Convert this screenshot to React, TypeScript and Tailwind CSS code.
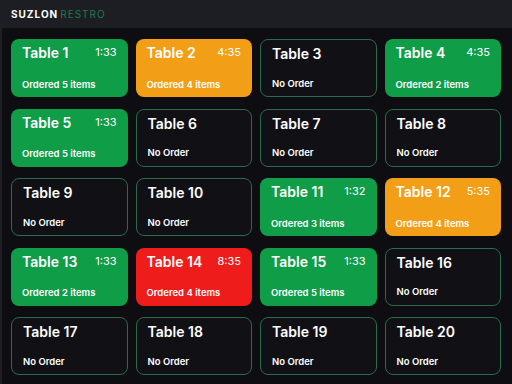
type TableInfo = { id: number; status: 'free' | 'green' | 'orange' | 'red'; time?: string; items?: number };

const tables: TableInfo[] = [
  { id: 1, status: 'green', time: '1:33', items: 5 },
  { id: 2, status: 'orange', time: '4:35', items: 4 },
  { id: 3, status: 'free' },
  { id: 4, status: 'green', time: '4:35', items: 2 },
  { id: 5, status: 'green', time: '1:33', items: 5 },
  { id: 6, status: 'free' },
  { id: 7, status: 'free' },
  { id: 8, status: 'free' },
  { id: 9, status: 'free' },
  { id: 10, status: 'free' },
  { id: 11, status: 'green', time: '1:32', items: 3 },
  { id: 12, status: 'orange', time: '5:35', items: 4 },
  { id: 13, status: 'green', time: '1:33', items: 2 },
  { id: 14, status: 'red', time: '8:35', items: 4 },
  { id: 15, status: 'green', time: '1:33', items: 5 },
  { id: 16, status: 'free' },
  { id: 17, status: 'free' },
  { id: 18, status: 'free' },
  { id: 19, status: 'free' },
  { id: 20, status: 'free' },
];

const cardStyles = {
  free: 'bg-[#111015] border border-[#2b6a4b]',
  green: 'bg-[#0f9d48]',
  orange: 'bg-[#f29f17]',
  red: 'bg-[#ef1c1c]',
};

export default function App() {
  return (
    <div className="w-[512px] h-[384px] bg-[#0e0e12] flex flex-col overflow-hidden" style={{ fontFamily: 'Inter, "Open Sans", sans-serif' }}>
      <div className="h-[28px] bg-[#1d1e23] flex items-center pl-[11px] text-[10px] font-bold tracking-[0.1em]">
        <span className="text-white">SUZLON</span>
        <span className="text-[#1e7a4e] font-normal ml-[2px]">RESTRO</span>
      </div>
      <div className="flex-1 border-l-2 border-[#1f2026] pl-[9px] pr-[11px] pt-[11px] grid grid-cols-4 gap-x-[8px] gap-y-[11.5px] content-start">
        {tables.map((t) => (
          <div key={t.id} className={`h-[58px] rounded-[8px] text-white px-[11px] pt-[3px] pb-[5px] flex flex-col justify-between ${cardStyles[t.status]}`}>
            <div className="flex items-center justify-between">
              <span className="text-[14px] font-semibold">Table {t.id}</span>
              {t.time && <span className="text-[11px]">{t.time}</span>}
            </div>
            <span className="text-[9.5px] font-semibold">
              {t.items ? `Ordered ${t.items} items` : 'No Order'}
            </span>
          </div>
        ))}
      </div>
    </div>
  );
}
